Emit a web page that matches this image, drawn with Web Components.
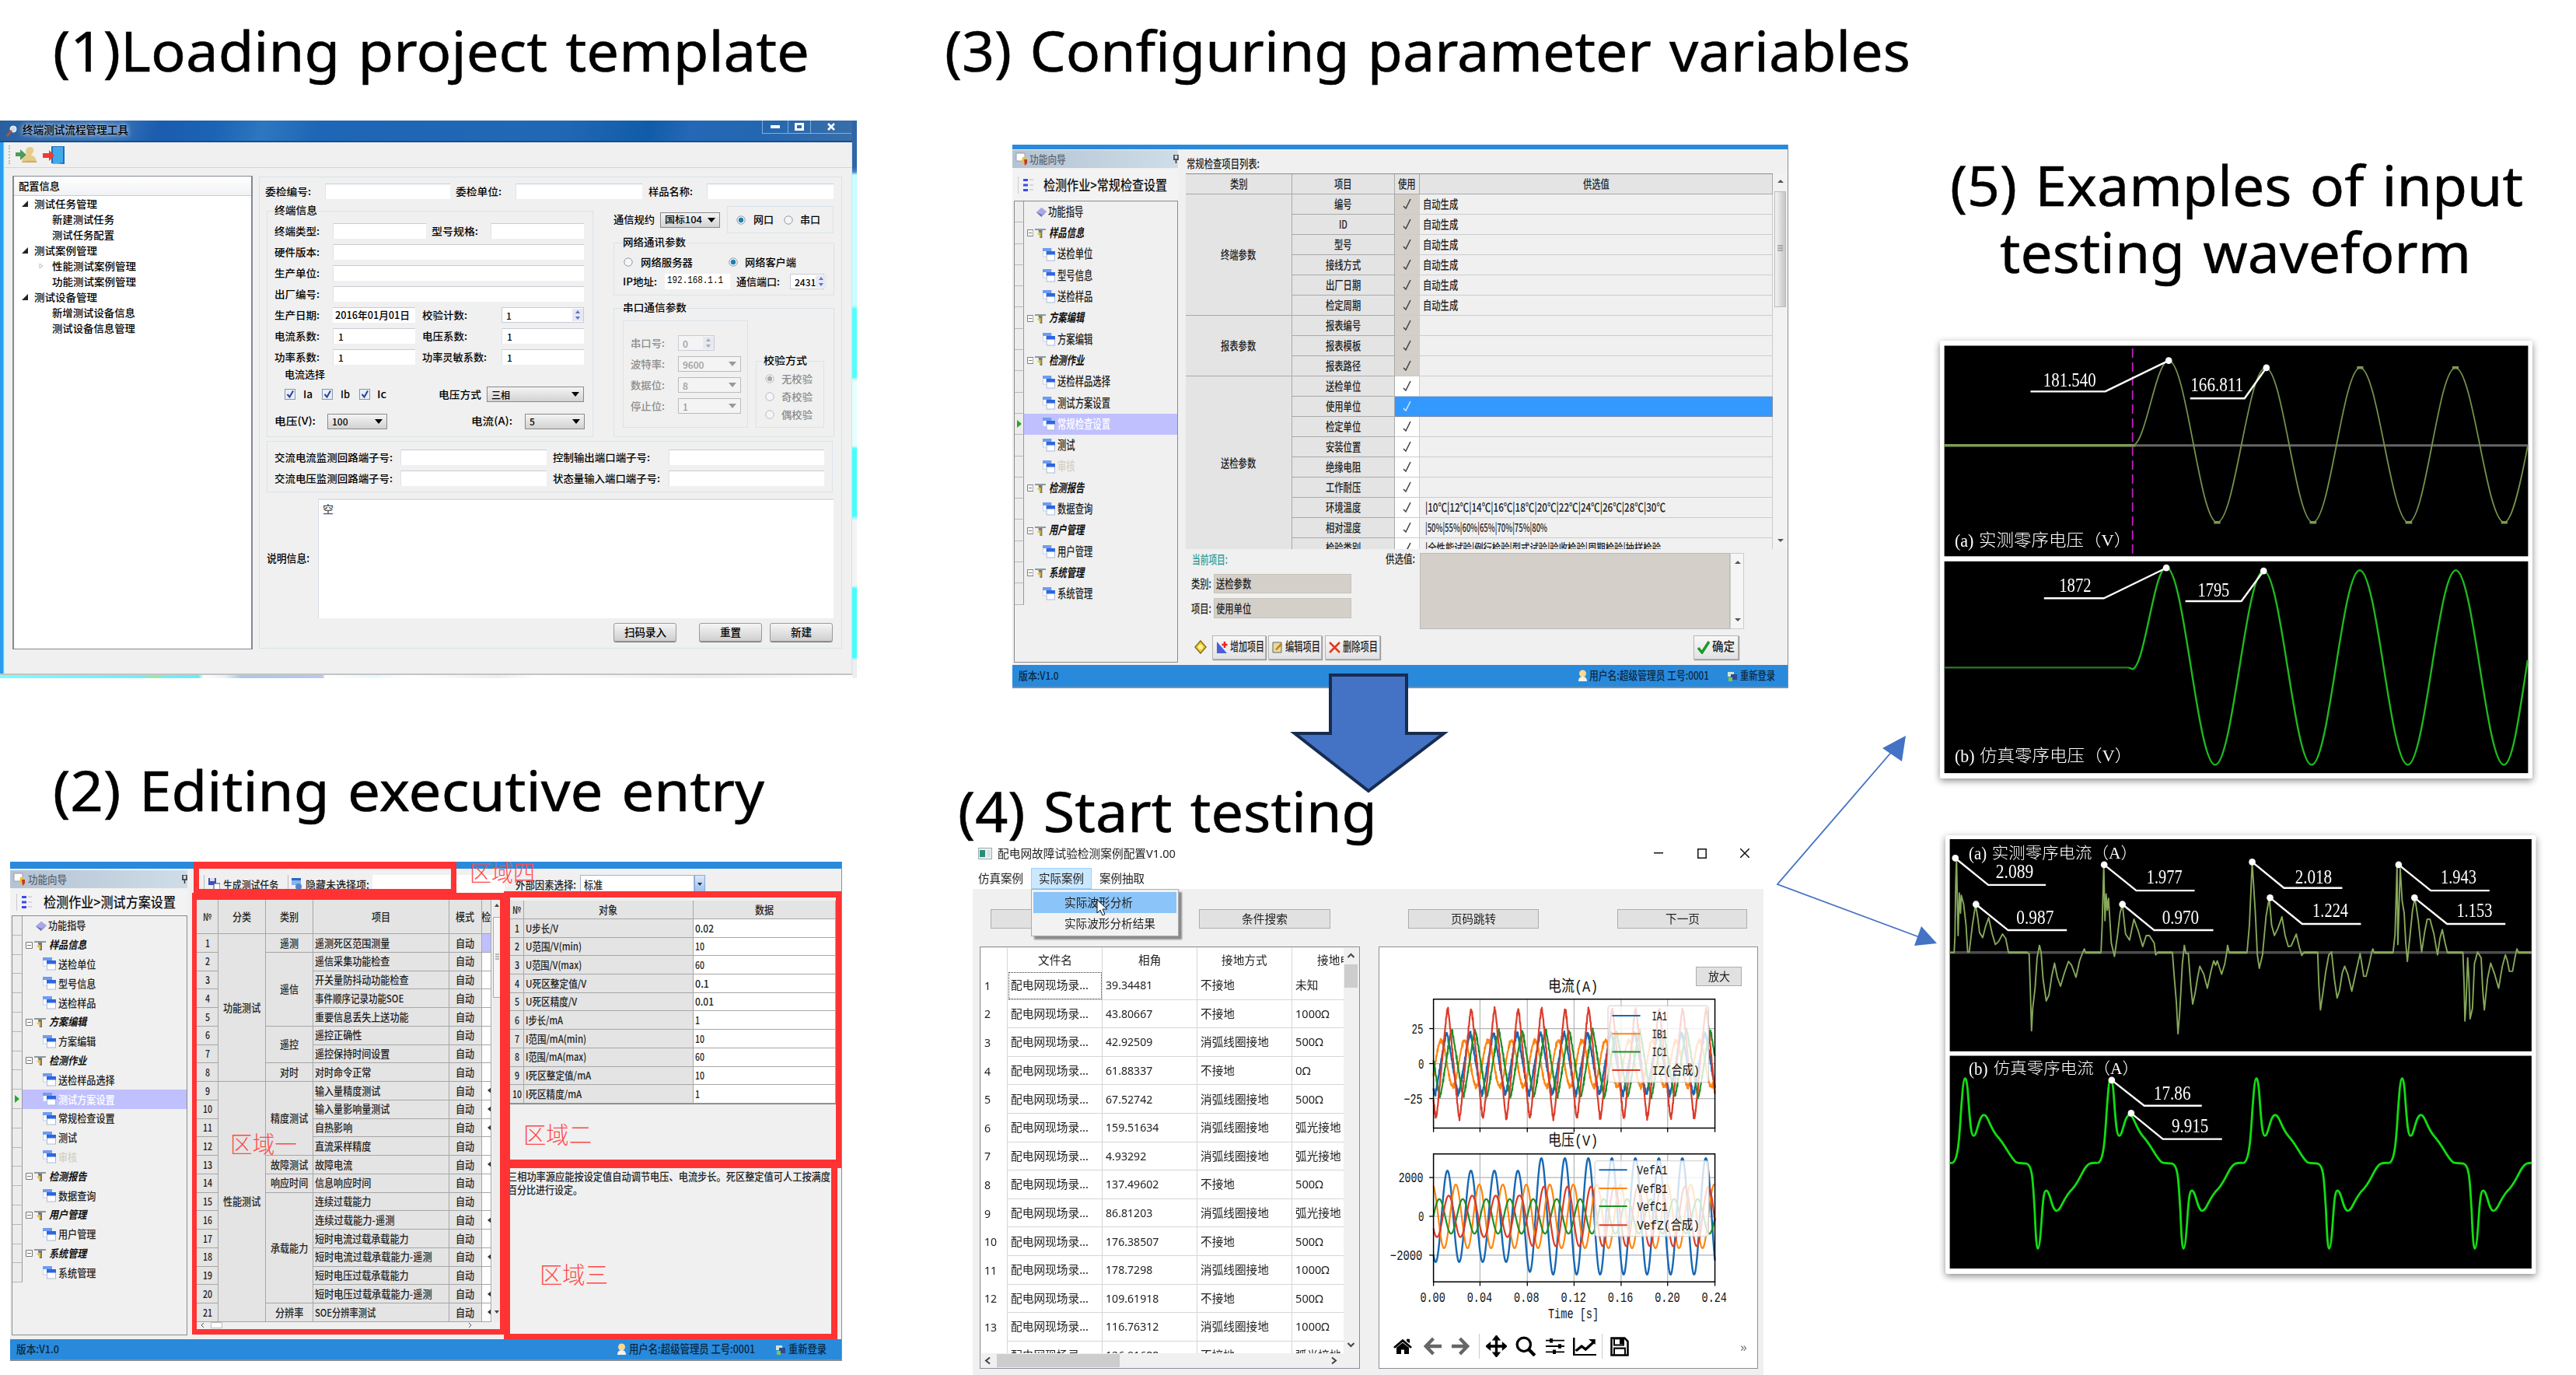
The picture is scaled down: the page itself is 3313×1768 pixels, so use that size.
<!DOCTYPE html>
<html lang="en">
<head>
<meta charset="utf-8">
<title>Testing workflow</title>
<style>
html,body{margin:0;padding:0;background:#fff}
body{width:3313px;height:1768px;overflow:hidden;position:relative;font-family:"Noto Sans","Noto Sans CJK SC",sans-serif}
.at{position:absolute}
</style>
</head>
<body>
<slide-title class="at" style="left:68px;top:24px" w="973">(1)Loading project template</slide-title>
<slide-title class="at" style="left:68px;top:975px" w="915">(2) Editing executive entry</slide-title>
<slide-title class="at" style="left:1215px;top:24px" w="1242">(3) Configuring parameter variables</slide-title>
<slide-title class="at" style="left:2508px;top:197px" w="737">(5) Examples of input</slide-title>
<slide-title class="at" style="left:2572px;top:283px" w="606">testing waveform</slide-title>
<form-window class="at" style="left:0;top:155px"></form-window>
<wizard-window class="at" style="left:13px;top:1108px" w="1070" h="642" strip="9" status="614" k="1" head="11" titlerow="34" title="检测作业&gt;测试方案设置" rh="24.8" fs="14" sel="9" navh="540"><plan-view></plan-view></wizard-window>
<wizard-window class="at" style="left:1302px;top:186px" w="998" h="699" strip="6" status="669" k="0.936" head="7" titlerow="41" title="检测作业&gt;常规检查设置" rh="27.3" fs="15.5" sel="10" navh="594"><check-view></check-view></wizard-window>
<fault-window class="at" style="left:1251px;top:1084px"></fault-window>
<slide-title class="at" style="left:1232px;top:1002px" w="539">(4) Start testing</slide-title>
<flow-arrows class="at" style="left:1655px;top:860px"></flow-arrows>
<wave-panel class="at" kind="voltage" style="left:2495px;top:438px"></wave-panel>
<wave-panel class="at" kind="current" style="left:2502px;top:1074px"></wave-panel>

<script>
const BASE=`:host{display:block}*{box-sizing:border-box}
.h{display:flex;flex:1;height:100%;align-items:center}.v{display:flex;flex-direction:column;flex:none;width:100%}
.v>div{flex:none;display:flex}.c{flex:none;display:flex;align-items:center;height:100%}
svg{display:block;flex:none}`;
const H=(x0,items,st='')=>{let p=x0;return `<div class="h" style="${st}">`+items.map(([x,w,c='',s=''])=>{const m=x-p;p=x+w;return `<div class="c" style="margin-left:${m.toFixed(2)}px;width:${w}px;${s}">${c}</div>`}).join('')+'</div>'};
const V=(y0,items,st='')=>{let p=y0;return `<div class="v" style="${st}">`+items.map(([y,h,c='',s=''])=>{const m=y-p;p=y+h;return `<div style="margin-top:${m.toFixed(2)}px;height:${h}px;${s}">${c}</div>`}).join('')+'</div>'};
const T=(w,t,fs=13,s='')=>`<fit-text w="${w}" style="font-size:${fs}px;${s}">${t}</fit-text>`;
const make=(name,css,html)=>customElements.define(name,class extends HTMLElement{
  connectedCallback(){ if(this.shadowRoot) return; const r=this.attachShadow({mode:'open'});
    r.innerHTML='<style>'+BASE+css+'</style>'+(typeof html==='function'?html(this):html); }
});
const svg=(w,h,vb,body,s='')=>`<svg width="${w}" height="${h}" viewBox="${vb}" preserveAspectRatio="none" style="${s}">${body}</svg>`;

/* ---------- headings ---------- */
make('slide-title',`:host{font-size:71px;line-height:82px;color:#000;font-family:"Noto Sans",sans-serif;word-spacing:4px;-webkit-text-stroke:.5px #000}`,
  el=>`<fit-text w="${el.getAttribute('w')}" style="line-height:82px"><slot></slot></fit-text>`);

/* ---------- window 1: terminal form ---------- */
const L=(x,w,t,s='')=>[x,w,T(w,t,13,s)];
const IN=(x,w,t='',s='')=>[x,w,t?`<span style="padding-left:6px;font-size:12px">${t}</span>`:'',`background:#fff;height:20px;border-top:1px solid #c9ccd2;border-left:1px solid #dde4ea;${s}`];
const CB=(x,w,t,dis,h=20)=>[x,w,`<span style="flex:1;padding-left:5px;font-size:12px;white-space:nowrap">${t}</span>${svg(10,6,'0 0 10 6',`<path d="M0 0h10L5 6z" fill="${dis?'#999':'#000'}"/>`,'margin-right:5px')}`,`height:${h}px;border:1px solid ${dis?'#bbb':'#8a8a8a'};background:${dis?'#f4f4f4':'linear-gradient(#f4f4f4,#d2d2d2)'};${dis?'color:#999':''}`];
const SP=(x,w,t,dis)=>[x,w,`<span style="flex:1;padding-left:5px;font-size:12px">${t}</span>${svg(14,16,'0 0 14 16',`<rect width="14" height="16" fill="#e6e9f2"/><path d="M4 6l3-4 3 4zM4 10l3 4 3-4z" fill="${dis?'#aaa':'#5b74c8'}"/>`)}`,`height:20px;background:${dis?'#f4f4f4':'#fff'};border:1px solid #c9ccd2;${dis?'color:#999':''}`];
const RD=(x,on,dis)=>[x-6,12,svg(12,12,'0 0 12 12',`<circle cx="6" cy="6" r="5.2" fill="#f6f6f6" stroke="${dis?'#bbb':'#8f9aa5'}"/>${on?`<circle cx="6" cy="6" r="3.2" fill="${dis?'#aaa':'#1c7fb5'}"/>`:''}`)];
const CK=x=>[x,14,svg(14,14,'0 0 14 14','<rect x=".5" y=".5" width="13" height="13" fill="#e9eef8" stroke="#8b95a5"/><path d="M3.5 7l3 3.500L11 2.500" fill="none" stroke="#26439a" stroke-width="2"/>')];
const BT=(x,w,t,tw)=>[x,w,T(tw,t,14),'justify-content:center;height:24px;border:1px solid #9a9a9a;border-radius:3px;background:linear-gradient(#f5f5f5,#cfcfcf);box-shadow:0 1px 0 #777'];
const BORD='box-shadow:inset 0 0 0 1px #d9e3ea;';
const treeRow=(x,w,t,lv)=>H(16,[[lv==0?26:48,10,lv==0?svg(8,8,'0 0 8 8','<path d="M8 0v8H0z" fill="#222"/>'):(lv==2?svg(6,8,'0 0 6 8','<path d="M1 1l4 3-4 3z" fill="none" stroke="#bbb"/>'):'')],[x,w,T(w,t,13)]]);
make('form-window',`:host{position:absolute;width:1102px;height:717px;overflow:hidden;color:#000;font-weight:500;--dy:-1.5px;font-family:"Noto Sans CJK SC",sans-serif;
 background:linear-gradient(90deg,#2c9cf0 0 4px,#8ff 5px,#f0f0f0 6px 1095px,#a8d8ee 1096px,#d8ffff 1102px)}
 .bar{background:linear-gradient(105deg,#2a5f9f 0,#3a75b8 140px,#1b5cae 200px,#1b64b4 270px,#2d77c0 330px,#1e66b6 400px,#2168b4 700px,#105ca8 810px,#2468b6 860px,#2467b0 950px,#3a6ea8);border-bottom:2px solid #174f8f}
 .edge{position:absolute;right:0;top:0;width:6px;height:717px;background:linear-gradient(#2f66a8 0 60px,#4a86c8 66px,#c8ffff 70px 238px,#5ff 242px 330px,#e8ffff 334px 418px,#4ff 422px 508px,#f4f4f4 514px 598px,#4ff 602px 690px,#eee 694px)}`,
()=>{
 const tree=V(226,[[226,25,H(16,[[22,53,T(53,'配置信息',13)]]),'border-bottom:1px solid #ccc;background:linear-gradient(#fff,#f1f2f4)'],
  ...[[42,81,'测试任务管理',0],[65,80,'新建测试任务',1],[65,80,'测试任务配置',1],[42,81,'测试案例管理',0],[65,108,'性能测试案例管理',2],[65,108,'功能测试案例管理',1],[42,81,'测试设备管理',0],[65,107,'新增测试设备信息',1],[65,107,'测试设备信息管理',1]].map((r,i)=>[251+i*20,20,treeRow(...r)])]);
 const leftG=V(270,[
  [262,14,H(343,[[353,55,T(55,'终端信息',13,'background:#f0f0f0')]])],
  [286,20,H(343,[L(353,58,'终端类型:'),IN(428,120),L(555,60,'型号规格:'),IN(631,120)])],
  [313,20,H(343,[L(353,58,'硬件版本:'),IN(428,323)])],
  [340,20,H(343,[L(353,58,'生产单位:'),IN(428,323)])],
  [367,20,H(343,[L(353,58,'出厂编号:'),IN(428,323)])],
  [394,20,H(343,[L(353,58,'生产日期:'),[428,106,'<span style="padding-left:3px">'+T(96,'2016年01月01日',13)+'</span>','background:#fff;height:20px;border-top:1px solid #c9ccd2'],L(543,58,'校验计数:'),SP(645,106,'1')])],
  [421,20,H(343,[L(353,58,'电流系数:'),IN(428,106,'1'),L(543,58,'电压系数:'),IN(645,106,'1')])],
  [448,20,H(343,[L(353,58,'功率系数:'),IN(428,106,'1'),L(543,83,'功率灵敏系数:'),IN(645,106,'1')])],
  [474,12,H(343,[[366,52,T(52,'电流选择',13)]])],
  [490,32,H(343,[CK(366),L(390,12,'Ia'),CK(414),L(438,12,'Ib'),CK(462),L(485,12,'Ic'),L(564,55,'电压方式'),CB(626,125,'三相')])],
  [530,21,H(343,[L(353,53,'电压(V):'),CB(421,77,'100'),L(606,53,'电流(A):'),CB(675,77,'5')])]
 ],BORD+'height:291px');
 const d='color:#8c8c8c';
 const rightG=V(263,[
  [265,35,H(789,[L(789,53,'通信规约'),CB(849,77,T(48,'国标104',12)),[935,137,H(935,[RD(953,1),L(969,26,'网口'),RD(1014,0),L(1029,26,'串口')]),BORD]])],
  [312,68,V(312,[[305,12,H(789,[[801,81,T(81,'网络通讯参数',13,'background:#f0f0f0')]])],[327,20,H(789,[RD(808,0),L(824,67,'网络服务器'),RD(943,1),L(958,66,'网络客户端')])],[352,20,H(789,[L(801,44,'IP地址:'),[855,84,'<span style="padding-left:3px">'+T(72,'192.168.1.1',12,'font-family:Liberation Mono')+'</span>','background:#fff'],L(947,56,'通信端口:'),SP(1016,44,'2431')])]]),BORD],
  [396,166,V(396,[[389,12,H(789,[[801,82,T(82,'串口通信参数',13,'background:#f0f0f0')]])],
    [412,138,H(789,[[801,161,V(412,[[431,20,H(801,[L(811,44,'串口号:',d),SP(872,47,'0',1)])],[458,20,H(801,[L(811,44,'波特率:',d),CB(872,81,'9600',1)])],[485,20,H(801,[L(811,44,'数据位:',d),CB(872,81,'8',1)])],[512,20,H(801,[L(811,44,'停止位:',d),CB(872,81,'1',1)])]]),'align-items:flex-start;'+BORD],
     [972,88,V(464,[[457,12,H(972,[[982,56,T(56,'校验方式',13,'background:#f0f0f0')]])],[477,20,H(972,[RD(990,1,1),L(1005,40,'无校验',d)])],[500,20,H(972,[RD(990,0,1),L(1005,40,'奇校验',d)])],[523,20,H(972,[RD(990,0,1),L(1005,40,'偶校验',d)])]]),'height:86px;margin-top:52px;align-items:flex-start;'+BORD]])]]),BORD]
 ]);
 const panel=V(227,[
  [236,20,H(333,[L(341,59,'委检编号:'),IN(418,161),L(586,59,'委检单位:'),IN(663,163),L(834,57,'样品名称:'),IN(909,163)])],
  [263,299,H(333,[[343,420,leftG,'height:291px'],[789,284,rightG,'height:299px;align-items:flex-start']],'align-items:flex-end')],
  [567,66,V(567,[[578,20,H(343,[L(353,152,'交流电流监测回路端子号:'),IN(515,188),L(711,125,'控制输出端口端子号:'),IN(860,200)])],[605,20,H(343,[L(353,152,'交流电压监测回路端子号:'),IN(515,188),L(711,138,'状态量输入端口端子号:'),IN(860,200)])]]),'margin-left:10px;width:728px;'+BORD],
  [641,154,H(333,[[343,55,T(55,'说明信息:',14)],[409,663,'<span style="padding:3px 5px;font-size:14px;line-height:16px;color:#555">空</span>','background:#fff;border-top:2px solid #dcdfe3;border-left:1px solid #d5dde3;align-items:flex-start']])],
  [801,24,H(333,[BT(789,81,'扫码录入',54),BT(899,81,'重置',27),BT(990,81,'新建',27)])]
 ]);
 const wb=';justify-content:center;align-self:flex-start;height:17px;border:solid #86abd6;border-width:0 0 1px 1px';
 return V(155,[
  [155,28,`<div class="bar" style="flex:1;display:flex">`+H(0,[[8,16,svg(14,15,'0 0 14 15','<circle cx="9" cy="5" r="4" fill="#cde" stroke="#fff"/><path d="M7 7l-6 7" stroke="#a85a3a" stroke-width="3"/>')],[29,136,T(136,'终端测试流程管理工具',13.5,'text-shadow:0 0 5px #cfe2ff,0 0 8px #bcd')],
    [980,33,svg(12,4,'0 0 12 4','<rect width="12" height="4" fill="#fff"/>'),wb],[1013,29,svg(12,10,'0 0 12 10','<path d="M1.500 1.500h9v7h-9z" fill="none" stroke="#fff" stroke-width="3"/>'),wb],[1042,53,svg(10,10,'0 0 10 10','<path d="M1 1l8 8M9 1l-8 8" stroke="#fff" stroke-width="2.500"/>'),wb]])+'</div>'],
  [183,33,H(6,[[11,2,'','border-left:2px dotted #bbb;height:24px'],[20,27,svg(27,22,'0 0 27 22','<path d="M8 21c0-8 5-8 7-10-4-4-1-11 4-10 6 1 5 7 1 10 4 2 7 4 7 10z" fill="#e6cc8a"/><path d="M8 21c2-3 12-2 19-2v2z" fill="#cfae62"/><path d="M0 8h6V4l8 7-8 7v-5H0z" fill="#4d9a5a"/>')],[55,28,svg(28,25,'0 0 28 25','<path d="M11 1h17v23l-17-1z" fill="#1c6fb8"/><path d="M13 2h13v20l-13 2z" fill="#43aaea"/><path d="M0 10h8V6l7 7-7 7v-4H0z" fill="#ee3a32"/>')]]),'margin-left:6px;width:1089px;background:#f0f0f0;border-bottom:1px solid #d4d4d4'],
  [216,650,H(0,[[16,309,tree,'background:#fff;border:solid #848891;border-width:1px 2px;height:609px;margin-top:10px;align-items:flex-start'],[333,750,panel,'height:607px;margin-top:11px;align-items:flex-start;'+BORD]],'align-items:flex-start')],
  [866,6,'','background:linear-gradient(90deg,#7ff 0,#6ef0f8 180px,#9fe8a0 200px,#6cf0ff 215px,#5eeeff 255px,#fff 262px,#e8f0f8 290px,#a9c8e8 310px,#b8c8f0 415px,#fff 418px,#e8f8ff 480px,#fff 530px,#eee 640px,#fff 690px,#eee 900px,#fff);border-top:2px solid #c4c4c4']
 ])+`<div class="edge"></div>`;
});

/* ---------- wizard windows (2 and 3) ---------- */
const NAV=[['功能指导',0],['样品信息',1],['送检单位',2],['型号信息',2],['送检样品',2],['方案编辑',1],['方案编辑',2],['检测作业',1],['送检样品选择',2],['测试方案设置',2],['常规检查设置',2],['测试',2],['审核',2],['检测报告',1],['数据查询',2],['用户管理',1],['用户管理',2],['系统管理',1],['系统管理',2]];
const NI=[
 svg('100%',15,'0 0 15 15','<path d="M1 8l7-6 7 5-7 7z" fill="#8f8fd6"/><path d="M1 8l7 3 7-4-7-5z" fill="#a9a9e4"/><path d="M1 8l7 3v3z" fill="#6a6ab0"/>'),
 svg('100%',15,'0 0 15 15','<path d="M0 2h15v2H10v2H5V4H0z" fill="#8d9a9a"/><path d="M5 4h5v10H7z" fill="#777"/><path d="M3 8l5-1v6z" fill="#f0c020"/>'),
 svg('100%',17,'0 0 17 17','<rect x=".5" y="1" width="11" height="10" fill="#fff" stroke="#c3d0ea"/><rect x="0" y="0" width="12" height="4" fill="#6f9cf0"/><rect x="5.500" y="6" width="11" height="10" fill="#fff" stroke="#a9b8dc"/><rect x="5" y="4" width="12" height="4.500" fill="#2c66e0"/>')];
make('nav-tree',`:host{background:#f0f0f0;border:1px solid #8b8b8b;overflow:hidden;color:#222}
 .r{display:flex;align-items:center;flex:none}.g{flex:none;height:100%;background:#ececec;border-right:1px solid #999;border-bottom:1px solid #b8b8b8;display:flex;align-items:center;justify-content:center}
 .on{background:#c0c0ff}.b{flex:1;display:flex;align-items:center;height:100%}`,
el=>{const k=+el.getAttribute('k'),rh=+el.getAttribute('rh'),fs=el.getAttribute('fs'),sel=+el.getAttribute('sel');
 return NAV.map(([t,lv],i)=>{const tw=(t.length*12.1*k).toFixed(1);
  const txt=T(tw,t,fs,(lv==1?'font-weight:700;font-style:italic;color:#111;':'')+(i==sel?'color:#fff;':'')+(i==12?'color:#d4d0c4;':''));
  const items=lv==0?[[29,15,NI[0]],[46,50,txt]]:lv==1?[[17,9,svg('100%',9,'0 0 9 9','<path d="M.5.5h8v8h-8zM2 4.500h5" fill="#fff" stroke="#777"/>')],[28,15,NI[1]],[47,50,txt]]:[[39,17,NI[2]],[59,80,txt]];
  return `<div class="r" style="height:${rh}px"><div class="g" style="width:${13*k}px">${i==sel?svg(6,10,'0 0 6 10','<path d="M0 0l6 5-6 5z" fill="#2aa52a"/>'):''}</div><div class="b ${i==sel?'on':''}">`+H(13*k,items.map(([x,w,c])=>[x*k,+(w*k).toFixed(2),c]))+`</div></div>`}).join('')});
make('wizard-window',`:host{position:absolute;background:#f0f0f0;font-family:"Noto Sans CJK SC",sans-serif;font-weight:500;color:#222;border-right:1.5px solid #8a8f96;border-bottom:2px solid #8a8f96;box-sizing:border-box;overflow:hidden;--dy:-1.5px}
 .nav{flex:none;display:flex;flex-direction:column}`,
el=>{const g=n=>+el.getAttribute(n),k=g('k'),w=g('w'),h=g('h');el.style.width=w+'px';el.style.height=h+'px';
 const q=a=>a.map(([x,w,c,s])=>[x*k,+(w*k).toFixed(2),c,s]);
 const head=H(0,q([[4,17,svg(16,17,'0 0 16 17','<path d="M1 1h11v10H1z" fill="#fff" stroke="#99a"/><path d="M9 6h5v6l-2 4-4-4z" fill="#f0c030"/><path d="M11 9h4v5l-3 3z" fill="#c0392b"/>')],[23,50,T(50*k,'功能向导',14,'color:#5b6672')],[221,7,svg(7,11,'0 0 7 11','<path d="M1 0h5v6h1H0h1zM3.500 6v5" fill="none" stroke="#333" stroke-width="1.500"/>')]]));
 const title=H(0,q([[3,6,'','border-right:1px solid #ccc;height:22px'],[15,14,svg(14,18,'0 0 14 18','<path d="M0 1h6v3H0zM0 7.500h6v3H0zM0 14h6v3H0z" fill="#3b4bf0"/><path d="M8 2h5M8 9h5M8 15h5" stroke="#bbb"/>')],[43,170,T(170*k,el.getAttribute('title').replace('>','&gt;'),18,'color:#111')]]),'background:#f3f3f3');
 const st=H(0,[[8,55*k,T(55*k,'版本:V1.0',14)],[(k==1?781:728),11,svg(11,16,'0 0 11 16','<circle cx="5.500" cy="5" r="4.500" fill="#ffd98a"/><path d="M0 15q0-6 5.500-6t5.500 6z" fill="#f6f2e6"/>')],[k==1?796:742,k==1?162:154,T(k==1?162:154,'用户名:超级管理员 工号:0001',14.5)],[k==1?985:920,13,svg(13,14,'0 0 13 14','<path d="M0 2h8v6H0z" fill="#cfe6cf"/><path d="M4 5h8v7H4z" fill="#304a90"/><path d="M1 9h5v5H1z" fill="#7ec850"/>')],[k==1?1001:936,k==1?49:45,T(k==1?49:45,'重新登录',14.5)]]);
 const hh=23,top=g('head');
 return V(0,[[0,g('strip'),'','background:#298adc'],
  [g('strip'),g('status')-g('strip'),`<div class="nav" style="width:${(228*k).toFixed(1)}px">`+V(g('strip'),[[top,hh,head,'background:linear-gradient(90deg,#b4c3d3,#cfdde9)'],[top+hh+1,g('titlerow'),title],[top+hh+1+g('titlerow'),g('navh'),`<nav-tree k="${k}" rh="${g('rh')}" fs="${g('fs')}" sel="${g('sel')}" style="flex:1;margin-left:2px"></nav-tree>`]])+`</div><slot></slot>`],
  [g('status'),h-g('status')-2,st,'background:#298adc;color:#0b2740']])});

make('plan-view',`:host{position:relative;width:840px;height:605px;flex:none;font-size:14px;color:#222;--dy:-.5px}
 .g{display:grid;background:#e4e4e4}.g>div{border:solid #a6a6a6;border-width:0 1px 1px 0;display:flex;align-items:center;justify-content:center;overflow:hidden}
 .g>.l{justify-content:flex-start;padding-left:2px}.w{background:#fff!important}.sel{background:#c0c0ff}
 .fr{position:absolute;border:7px solid #f33}.tag{position:absolute;color:#ff4a4a;font-weight:300}`,
()=>{ /* origin of this view is x=241, y=1117 on the page */
 const items='遥测死区范围测量,遥信采集功能检查,开关量防抖动功能检查,事件顺序记录功能SOE,重要信息丢失上送功能,遥控正确性,遥控保持时间设置,对时命令正常,输入量精度测试,输入量影响量测试,自热影响,直流采样精度,故障电流,信息响应时间,连续过载能力,连续过载能力-遥测,短时电流过载承载能力,短时电流过载承载能力-遥测,短时电压过载承载能力,短时电压过载承载能力-遥测,SOE分辨率测试'.split(',');
 const wid=t=>{let n=0;for(const c of t)n+=c.charCodeAt(0)>255?12.05:6;return n.toFixed(1)};
 const F=(t,s)=>T(wid(t),t,13.5,s);
 const cell=(c,r,rs,t,cl='')=>`<div class="${cl}" style="grid-column:${c};grid-row:${r}/span ${rs}">${t}</div>`;
 let a='';['№','分类','类别','项目','模式','检'].forEach((t,i)=>a+=cell(i+1,1,1,i==0?T(11,t,13):F(t)));
 items.forEach((t,i)=>{a+=cell(1,i+2,1,F(''+(i+1)))+cell(4,i+2,1,F(t),'l')+cell(5,i+2,1,F('自动'))+cell(6,i+2,1,[9,10,11,13,16,18,20,21].includes(i+1)?svg(5,8,'0 0 5 8','<path d="M5 0v8L0 4z" fill="#333"/>','margin-left:7px'):'',i?'w':'sel')});
 a+=cell(2,2,8,F('功能测试'))+cell(2,10,13,F('性能测试'));
 let r=2;[['遥测',1],['遥信',4],['遥控',2],['对时',1],['精度测试',4],['故障测试',1],['响应时间',1],['承载能力',6],['分辨率',1]].forEach(([t,n])=>{a+=cell(3,r,n,F(t));r+=n});
 const g1=`<div class="g" style="grid-template-columns:28px 61px 61px 175px 42px 12px;grid-template-rows:44px repeat(21,23.75px);height:543px">${a}</div>`;
 let b='';['№','对象','数据'].forEach((t,i)=>b+=cell(i+1,1,1,i==0?T(11,t,13):F(t)));
 ['U步长/V,0.02','U范围/V(min),10','U范围/V(max),60','U死区整定值/V,0.1','U死区精度/V,0.01','I步长/mA,1','I范围/mA(min),10','I范围/mA(max),60','I死区整定值/mA,10','I死区精度/mA,1'].forEach((s,i)=>{const [x,y]=s.split(',');b+=cell(1,i+2,1,F(''+(i+1)))+cell(2,i+2,1,F(x),'l')+cell(3,i+2,1,F(y),'l w')});
 const g2=`<div class="g" style="grid-template-columns:18px 218px 183px;grid-template-rows:24px repeat(10,23.7px);border-bottom:1px solid #777">${b}</div>`;
 const ico=svg(15,16,'0 0 15 16','<path d="M0 0h10v9H0z" fill="#3f4fc0"/><path d="M2 0h6v4H2z" fill="#dde"/><path d="M7 7h8v9H7z" fill="#fff" stroke="#446"/>');
 const ico2=svg(14,16,'0 0 14 16','<path d="M0 0h12v9H0z" fill="#8ab4ee"/><path d="M0 0h12v3H0z" fill="#2c66c0"/><circle cx="9" cy="11" r="4" fill="#4d88c8"/>');
 return V(1117,[
  [1125,23,H(241,[[262,2,'','border-left:1px solid #bbb'],[268,15,ico],[287,71,T(71,'生成测试任务',14)],[370,2,'','border-left:1px solid #bbb'],[375,14,ico2],[393,82,T(82,'隐藏未选择项:',14)],[479,100,'','background:#fff'],[587,62,'','background:#fff'],[663,78,T(78,'外部因素选择:',14)],[746,147,'<span style="padding-left:4px">'+T(24,'标准',14)+'</span>','background:#fff;border:1px solid #9fb6d6'],[893,14,svg(6,4,'0 0 6 4','<path d="M0 0h6L3 4z" fill="#234"/>'),'justify-content:center;background:linear-gradient(#dbe8fb,#9dbdeb);border:1px solid #8aa8d8']])],
  [1157,560,H(241,[[253,379,V(1157,[[1157,543,g1],[1700,9,svg(360,8,'0 0 360 8','<path d="M9 1L6 4l3 3M350 1l3 3-3 3" fill="none" stroke="#555"/><path d="M18.500 .5h14v7h-14z" fill="#fff" stroke="#bbb"/>')]]),'align-items:flex-start'],
   [634,9,svg(9,543,'0 0 9 543','<rect width="9" height="543" fill="#ececec"/><path d="M2 9l3-4 3 4zM2 528l3 4 3-4z" fill="#444"/><rect x=".5" y="22.500" width="9" height="103" fill="#f5f5f5" stroke="#aaa"/><path d="M3 70h5M3 73h5M3 76h5" stroke="#777"/>'),'align-items:flex-start'],
   [653,424,V(1157,[[1158,262,g2,'width:419px;margin-left:3px'],[1504,36,`<div style="line-height:17px">${T(415,'三相功率源应能按设定值自动调节电压、电流步长。死区整定值可人工按满度',14,'line-height:17px')}${T(96,'百分比进行设定。',14,'line-height:17px')}</div>`]]),'align-items:flex-start']])]
 ])+`
 <div class="fr" style="left:8px;top:-9px;width:338px;height:42px;border-top-width:9px"></div>
 <div class="fr" style="left:6px;top:31px;width:409px;height:568px;border-width:9px 13px 7px 6px"></div>
 <div class="fr" style="left:407px;top:29px;width:434px;height:356px;border-width:8px 7px 11px 7px"></div>
 <div class="fr" style="left:407px;top:376px;width:429px;height:229px;border-width:9px 8px 7px 6px"></div>
 <div class="tag" style="left:363px;top:-12px">${T(84,'区域四',30)}</div>
 <div class="tag" style="left:55px;top:337px">${T(86,'区域一',30)}</div>
 <div class="tag" style="left:432px;top:325px">${T(88,'区域二',30)}</div>
 <div class="tag" style="left:453px;top:505px">${T(88,'区域三',30)}</div>`});

make('check-view',`:host{width:784px;height:663px;flex:none;color:#222}
 .g{display:grid;background:#e4e4e4;height:483px;overflow:hidden;border-top:1.5px solid #8c8c8c}.g>div{border:solid #a9a9a9;border-width:0 1px 1.500px 0;display:flex;align-items:center;justify-content:center;overflow:hidden}
 .g>.l{justify-content:flex-start;padding-left:4px;background:#f0f0f0;border-color:#ccc}.tan{background:#d4cfc8;border-color:#ccc!important}.w{background:#fff;border-color:#ccc!important}.g>.s{background:#39f;border-color:#78a!important}`,
()=>{ /* origin of this view is x=1515.4, y=192 on the page */
 const X0=1515.4,F=(t,s)=>T((t.length*11.3).toFixed(1),t,15,s);
 const items='编号,ID,型号,接线方式,出厂日期,检定周期,报表编号,报表模板,报表路径,送检单位,使用单位,检定单位,安装位置,绝缘电阻,工作耐压,环境温度,相对湿度,检验类别'.split(',');
 const cell=(c,r,rs,t,cl='')=>`<div class="${cl}" style="grid-column:${c};grid-row:${r}/span ${rs}">${t}</div>`;
 let a='';['类别','项目','使用','供选值'].forEach((t,i)=>a+=cell(i+1,1,1,F(t)));
 items.forEach((t,i)=>{const v=i<6?F('自动生成'):i==15?T(309,'|10℃|12℃|14℃|16℃|18℃|20℃|22℃|24℃|26℃|28℃|30℃',15,'margin-left:3px'):i==16?T(157,'|50%|55%|60%|65%|70%|75%|80%',15,'margin-left:3px'):i==17?T(303,'|全性能试验|例行检验|型式试验|验收检验|周期检验|抽样检验',15,'margin-left:3px'):'';
  a+=cell(2,i+2,1,t=='ID'?T(11,t,14):F(t))+cell(3,i+2,1,svg(11,15,'0 0 11 15',`<path d="M1 10l3 3L10 1" fill="none" stroke="${i==10?'#cfe6ff':'#444'}" stroke-width="1.600"/>`),i==10?'s':i<9?'tan':'w')+cell(4,i+2,1,v,i==10?'l s':'l')});
 a+=cell(1,2,6,F('终端参数'))+cell(1,8,3,F('报表参数'))+`<div style="grid-column:1;grid-row:11/span 9;padding-bottom:11px">${F('送检参数')}</div>`;
 const g=`<div class="g" style="width:755px;grid-template-columns:137px 132px 32px 454px;grid-template-rows:26px repeat(18,26px)">${a}</div>`;
 const sb=svg(17,483,'0 0 17 483','<defs><linearGradient id="s"><stop offset="0" stop-color="#f6f6f6"/><stop offset="1" stop-color="#c4c4c4"/></linearGradient></defs><rect width="17" height="483" fill="#f2f2f2"/><path d="M5 12l4-4 4 4zM5 470l4 4 4-4z" fill="#555"/><rect x="1.500" y="23.500" width="14" height="148" fill="url(#s)" stroke="#bbb"/><path d="M5 93h7M5 96h7M5 99h7" stroke="#777"/>');
 const B=(x,w,ic,t,tw)=>[x,w,ic+T(tw,t,15.5,'margin-left:3px'),'height:31px;padding-left:4px;border:1px solid #b5b5b5;background:linear-gradient(#f8f8f8,#e2e2e2);box-shadow:1px 1px 1px #999'];
 return V(192,[
  [201,18,H(X0,[[1526,94,T(94,'常规检查项目列表:',15)]])],
  [223,483,H(X0,[[1525,755,g],[2281,17,sb]]),''],
  [706,104,H(X0,[[1526,212,V(706,[[709,20,H(1526,[[1533,46,T(46,'当前项目:',15,'color:#2a9d94')]])],[738,25,H(1526,[[1532,27,T(26,'类别:',15)],[1561,177,F('送检参数','margin-left:2px'),'background:#d4cfc8;border:1px solid #c6c2bb']])],[769,26,H(1526,[[1532,27,T(26,'项目:',15)],[1561,177,F('使用单位','margin-left:2px'),'background:#d4cfc8;border:1px solid #c6c2bb']])]]),'align-items:flex-start'],
    [1782,40,T(38,'供选值:',15),'height:24px;align-self:flex-start'],[1826,399,'','background:#d4cfc8;height:98px;border:1px solid #bbb;margin-top:5px'],[2225,18,svg(17,98,'0 0 17 98','<path d="M5 14l4-4 4 4zM5 84l4 4 4-4z" fill="#555"/>'),'height:98px;background:#f5f5f5;border:1px solid #ccc;margin-top:5px']],'align-items:flex-start')],
  [816,32,H(X0,[[1536,16,svg(16,18,'0 0 16 18','<path d="M8 1l7 8-7 8-7-8z" fill="#f3cf2e" stroke="#86701a" stroke-width="1.500"/><circle cx="8" cy="9" r="3" fill="#fff3a0"/>')],
   B(1559,69,svg(15,17,'0 0 15 17','<path d="M1 1v15h13z" fill="#4a5fd8"/><path d="M11 1v8M7.500 5h7" stroke="#e22" stroke-width="2.500"/>'),'增加项目',44),
   B(1631,69,svg(14,16,'0 0 14 16','<path d="M1 2h11v13H1z" fill="#e9d9a0" stroke="#666"/><path d="M4 11l7-8 2 2-7 7z" fill="#b8860b"/>'),'编辑项目',45),
   B(1704,71,svg(15,15,'0 0 15 15','<path d="M1 1l13 13M14 1L1 14" stroke="#e03a1e" stroke-width="2.500"/>'),'删除项目',45),
   B(2178,58,svg(16,18,'0 0 16 18','<path d="M1 10l5 6L15 2" fill="none" stroke="#1b9a2a" stroke-width="3.500"/>'),'确定',29)])]
 ])});

/* ---------- window 4 ---------- */
const X=(x1,x2,yc,fs,t,o='')=>`<text x="${x1}" y="${yc+fs*.35}" font-size="${fs}" textLength="${x2-x1}" lengthAdjust="spacingAndGlyphs" ${o}>${t}</text>`;
make('signal-plot',`:host{flex:none;width:488px;height:543px}text{font-family:"Liberation Mono","Noto Sans CJK SC",monospace;fill:#111}`,()=>{
 const NS='vector-effect="non-scaling-stroke" fill="none"';
 const curve=(fn,c,w)=>{let d='';for(let x=273;x<=1344;x+=1.5)d+=(d?'L':'M')+x.toFixed(1)+' '+fn(x).toFixed(1);return `<path d="${d}" stroke="${c}" stroke-width="${w}" ${NS} stroke-linejoin="round"/>`};
 const P=89.4,cs=(x,p)=>Math.cos((x-p)/P*2*Math.PI);
 const tri=v=>Math.asin(v*.97)/1.33;
 const n=(x,a)=>a*Math.sin(x*1.9)*Math.cos(x*.37);
 const frame=(y1,y2,ys)=>[450,630,808,987,1164].map(x=>`<path d="M${x} ${y1}V${y2}" stroke="#b4b4b4" stroke-width="1.200" ${NS}/>`).join('')+ys.map(y=>`<path d="M273 ${y}H1344" stroke="#b4b4b4" stroke-width="1.200" ${NS}/><path d="M257 ${y}h16" stroke="#000" stroke-width="1.300" ${NS}/>`).join('');
 const edge=(y1,y2)=>`<path d="M273 ${y1}H1344V${y2}H273Z" stroke="#000" stroke-width="1.500" ${NS}/>`+[273,450,630,808,987,1164,1344].map(x=>`<path d="M${x} ${y2}v12" stroke="#000" stroke-width="1.300" ${NS}/>`).join('');
 const C=['#1668b4','#ff850f','#1c8f26','#dc3a28'];
 const amp=(x,a,b)=>{const t=Math.min(1,Math.max(0,(x-600)/50));return a+(b-a)*t};
 const leg=(x,y,w,h,lx,tx,ys,ts,ends)=>`<rect x="${x}" y="${y}" width="${w}" height="${h}" rx="9" fill="#fff" fill-opacity=".8" stroke="#ccc" vector-effect="non-scaling-stroke"/>`+ys.map((q,i)=>`<path d="M${lx} ${q}h107" stroke="${C[i]}" stroke-width="2" ${NS}/>`+X(tx,ends[i],q,38,ts[i])).join('');
 return svg(488,543,'67 331 1444 1219',
  frame(483,855,[568,669,770])+
  curve(x=>669-88*tri(cs(x,323))+n(x,9),C[0],2.4)+curve(x=>669-66*cs(x,302)+n(x+7,8),C[1],2.2)+curve(x=>669-94*tri(cs(x,342))+n(x+3,9),C[2],2.2)+curve(x=>669-157*tri(cs(x,327))+n(x+11,9),C[3],2.2)+
  edge(483,855)+X(709,900,445,46,'电流(A)')+X(190,234,568,40,'25')+X(215,237,669,40,'0')+X(160,231,770,40,'−25')+
  leg(937,502,383,221,953,1104,[531,583,635,688],['IA1','IB1','IC1','IZ(合成)'],[1162,1162,1162,1286])+
  frame(930,1299,[998,1110,1222])+
  curve(x=>1110-amp(x,132,168)*cs(x,326),C[0],2.4)+curve(x=>1110-92*cs(x,358),C[1],2.2)+curve(x=>1110-50*cs(x,295),C[2],2.2)+curve(x=>1110-amp(x,60,86)*cs(x,331+Math.min(1,Math.max(0,(x-600)/50))*5),C[3],2.2)+
  edge(930,1299)+X(709,900,890,46,'电压(V)')+X(140,234,998,40,'2000')+X(215,237,1110,40,'0')+X(108,231,1222,40,'−2000')+
  leg(887,950,433,218,903,1047,[976,1029,1081,1135],['VefA1','VefB1','VefC1','VefZ(合成)'],[1164,1164,1164,1286])+
  ['0.00','0.04','0.08','0.12','0.16','0.20','0.24'].map((t,i)=>X(222+i*178.6,318+i*178.6,1342,40,t)).join('')+X(709,902,1390,40,'Time [s]'))});
make('fault-window',`:host{width:1017px;height:684px;background:#f0f0f0;color:#222;font-family:"Noto Sans","Noto Sans CJK SC",sans-serif;overflow:hidden}
 .row{display:grid;grid-template-columns:34px 122px 122px 122px 66px;flex:none;height:100%}.row>div{border:solid #d6d6d6;border-width:0 1px 1.500px 0;padding-left:4px;display:flex;align-items:center;overflow:hidden}
 .row>div:first-child{border-bottom:0}.hd>div{border-bottom:0;padding:0;justify-content:center}
 .menu{position:absolute;left:75px;top:59px;width:190px;height:61px;background:#f2f2f2;border:1px solid #ababab;box-shadow:4px 4px 2px #8a8a8a;padding:3px 2px;z-index:2}
 .menu>div{height:27px;display:flex;align-items:center;padding-left:40px}.menu>div:first-child{background:#8bc4f8}
 .cur,.zoomb,.tb{position:absolute;z-index:3}`,()=>{
 const W=t=>{let n=0;for(const c of t)n+=c.charCodeAt(0)>0x2e80?14.65:c=='Ω'?11.5:c=='.'?4:8.05;return n.toFixed(1)};
 const F=(t,s='')=>T(W(t),t,15,s);
 const B=(x,w,t,tw)=>[x,w,t?T(tw,t,15):'','justify-content:center;height:25px;background:#e1e1e1;border:1.500px solid #adadad'];
 const data=[['39.34481','不接地','未知'],['43.80667','不接地','1000Ω'],['42.92509','消弧线圈接地','500Ω'],['61.88337','不接地','0Ω'],['67.52742','消弧线圈接地','500Ω'],['159.51634','消弧线圈接地','弧光接地'],['4.93292','消弧线圈接地','弧光接地'],['137.49602','不接地','500Ω'],['86.81203','消弧线圈接地','弧光接地'],['176.38507','不接地','500Ω'],['178.7298','消弧线圈接地','1000Ω'],['109.61918','不接地','500Ω'],['116.76312','消弧线圈接地','1000Ω'],['126.91688','不接地','弧光接地']];
 const row=(d,i)=>`<div class="row" style="height:36.6px"><div>${F(i<13?''+(i+1):'')}</div><div ${i==0?'style="outline:1.500px dotted #333;outline-offset:-2px"':''}>${T(100,'配电网现场录...',15)}</div>${d.map((t,j)=>`<div ${j==2?'style="border-right:0"':''}>${F(t)}</div>`).join('')}</div>`;
 const table=`<div style="width:466px;height:521px;overflow:hidden;background:#fff"><div class="row hd" style="height:30px"><div></div><div>${F('文件名')}</div><div>${F('相角')}</div><div>${F('接地方式')}</div><div style="justify-content:flex-start;padding-left:32px;border-right:0">${F('接地电阻')}</div></div>${data.map(row).join('')}</div>`;
 const vsb=svg(19,521,'0 0 19 521','<rect width="19" height="521" fill="#f0f0f0"/><path d="M5.500 12l4-4 4 4M5.500 508l4 4 4-4" fill="none" stroke="#444" stroke-width="2"/><rect x="1" y="21" width="17" height="30" fill="#cdcdcd"/>');
 const hsb=svg(485,19,'0 0 485 19','<rect width="485" height="19" fill="#f0f0f0"/><path d="M12 5.500l-5 4 5 4M452 5.500l5 4-5 4" fill="none" stroke="#444" stroke-width="2"/><rect x="21" y="1" width="158" height="17" fill="#cdcdcd"/>');
 const I=(w,h,b)=>svg(w,h,'0 0 24 24',b);
 const tools=[[1792,24,I(24,22,'<path d="M0 13L12 2l12 11-2 2L12 6 2 15zM4 14l8-7 8 7v9h-6v-6h-4v6H4zM17 2h4v6l-4-3z" fill="#000"/>')],
  [1831,24,I(23,24,'<path d="M13 2L3 12l10 10M4 12h20" fill="none" stroke="#666" stroke-width="4.500"/>')],[1867,24,I(23,24,'<path d="M11 2l10 10-10 10M20 12H0" fill="none" stroke="#666" stroke-width="4.500"/>')],
  [1902,1,'','background:#ccc;height:32px'],
  [1911,27,I(27,28,'<path d="M12 0l4 5h-3v6h6V8l5 4-5 4v-3h-6v6h3l-4 5-4-5h3v-6H5v3L0 12l5-4v3h6V5H8z" fill="#000" stroke="#000"/>')],
  [1949,26,I(26,26,'<circle cx="10" cy="10" r="8" fill="none" stroke="#000" stroke-width="3"/><path d="M15.500 15.500L23 23" stroke="#000" stroke-width="4"/>')],
  [1988,24,I(24,22,'<path d="M0 4h24M0 12h24M0 20h24" stroke="#000" stroke-width="2"/><path d="M5 1h4v6H5zM16 9h4v6h-4zM9 17h4v6H9z" fill="#000"/>')],
  [2023,30,I(30,24,'<path d="M1 1v22h23" fill="none" stroke="#000" stroke-width="2"/><path d="M3 18l6-6 4 4 8-9" fill="none" stroke="#000" stroke-width="3"/><path d="M16 3h7v7z" fill="#000"/>')],
  [2060,1,'','background:#ccc;height:32px'],
  [2071,24,I(24,25,'<path d="M1.500 1.500h17l4 4v17h-21z" fill="none" stroke="#000" stroke-width="2.500"/><path d="M5 2h12v8H5zM5 22v-8h14v8" fill="none" stroke="#000" stroke-width="2"/><path d="M12 2h4v7h-4z" fill="#000"/>')],
  [2238,12,T(9,'»',17,'color:#777')]];
 return V(1084,[
  [1084,26,H(1251,[[1258,18,svg(18,15,'0 0 18 15','<rect x=".5" y=".5" width="17" height="14" fill="#eef2f2" stroke="#9aa"/><rect x="2" y="3" width="7" height="9" fill="#2e8b7a"/><rect x="11" y="3" width="5" height="9" fill="#d8e4e4"/>')],[1283,229,T(229,'配电网故障试验检测案例配置V1.00',15)],[2127,12,svg(12,2,'0 0 12 2','<rect width="12" height="1.500" fill="#111"/>')],[2183,12,svg(12,13,'0 0 12 13','<rect x=".8" y=".8" width="10.400" height="11.400" fill="none" stroke="#111" stroke-width="1.500"/>')],[2238,12,svg(12,12,'0 0 12 12','<path d="M0 0l12 12M12 0L0 12" stroke="#111" stroke-width="1.500"/>')]]),'background:#fff'],
  [1110,33,H(1251,[[1258,58,T(58,'仿真案例',15)],[1326,78,T(58,'实际案例',15),'justify-content:center;height:27px;background:#cce8ff;border:1px solid #99d1ff'],[1414,58,T(58,'案例抽取',15)]],'align-items:center;padding-top:6px'),'background:#fff;box-sizing:border-box'],
  [1169,25,H(1251,[B(1274,169),B(1542,169,'条件搜索',59),B(1811,168,'页码跳转',58),B(2080,167,'下一页',44)])],
  [1217,543,H(1251,[[1260,489,V(1218,[[1219,521,`${table}${vsb}`,'padding-left:1px;width:487px'],[1740,19,hsb]]),'border:1.500px solid #8a8f96;align-items:flex-start'],
   [1773,488,`<signal-plot></signal-plot>`,'background:#fff;border:1.500px solid #8a8f96']])]
 ])+`<div class="menu"><div>${T(88,'实际波形分析',15)}</div><div>${T(117,'实际波形分析结果',15)}</div></div>
 <div class="cur" style="left:159px;top:72px">${svg(15,23,'0 0 15 23','<path d="M1 1v17l4-4 3 7 3-1.500-3-6.500h6z" fill="#fff" stroke="#111"/>')}</div>
 <div class="zoomb" style="left:930px;top:159px;width:59px;height:25px;display:flex;align-items:center;justify-content:center;background:#e1e1e1;border:1.500px solid #adadad">${T(28,'放大',15)}</div>
 <div class="tb" style="left:522px;top:630px;width:488px;height:34px">${H(1773,tools)}</div>`});

/* ---------- arrows ---------- */
make('flow-arrows',`:host{width:860px;height:370px;pointer-events:none}`,svg(860,370,'1655 860 860 370',
 `<path d="M1711 868H1809V943H1857L1760 1017L1665 943H1711Z" fill="#4472c4" stroke="#172c51" stroke-width="4"/>
 <path d="M2436 963L2286 1137L2474 1207" fill="none" stroke="#4472c4" stroke-width="1.800"/>
 <path d="M2451 946L2421 962L2446 979Z" fill="#4472c4"/><path d="M2491 1213L2462 1216L2471 1191Z" fill="#4472c4"/>`));

/* ---------- waveform panels ---------- */
make('wave-panel',`:host{filter:drop-shadow(0 3px 5px rgba(0,0,0,.45))}text{fill:#fff;font-family:"Liberation Serif","Noto Sans CJK SC",serif;font-weight:300}`,el=>{
 const NS='vector-effect="non-scaling-stroke" fill="none" stroke-linejoin="round"';
 const call=(x,y,x1,yl,x2,tx,te,ty,t)=>`<path d="M${x2} ${yl}H${x1}L${x} ${y}" stroke="#fff" stroke-width="2.400" ${NS}/><ellipse cx="${x}" cy="${y}" rx="8.500" ry="11.500" fill="#fff"/>`+X(tx,te,ty-2,64,t);
 const wave=(p)=>{let d='M'+p[0];for(let i=1;i<p.length;i++){const [a,b]=p[i-1],[c,e]=p[i],k=(c-a)*.3642;d+=`C${a+k} ${b} ${c-k} ${e} ${c} ${e}`}return d};
 if(el.getAttribute('kind')=='voltage'){
  return svg(762,563,'30 46 1492 1472',`<rect x="30" y="46" width="1492" height="1472" rx="5" fill="#fff"/><rect x="41" y="63" width="1470" height="708"/><rect x="41" y="788" width="1470" height="712"/>
  <path d="M518 398H1510" stroke="#666" stroke-width="3" ${NS}/><path d="M41 398H522" stroke="#7f9d55" stroke-width="3.500" ${NS}/>
  <path d="M515 72V762" stroke="#c31fc3" stroke-width="1.800" stroke-dasharray="12 6" ${NS}/>
  <path d="${wave([[515,398],[606,113],[728,657],[850,137],[969,657],[1088,137],[1210,657],[1328,137],[1451,657]])}C1470 657 1490 540 1510 400" stroke="#76924c" stroke-width="1.800" ${NS}/>
  <path d="M720 657h16M961 657h17M1202 657h17M1443 657h16M1080 137h16M1320 137h16" stroke="#7d9b52" stroke-width="3.500" ${NS}/>
  ${call(606,113,446,217,258,290,423,180,'181.540')}${call(852,137,797,240,660,661,794,195,'166.811')}
  ${X(67,115,719,60,'(a)')}${X(128,512,717,56,'实测零序电压（V）')}
  <path d="M41 1145H506" stroke="#2c7a26" stroke-width="2.200" ${NS}/>
  <path d="M506 1145L514 1150${wave([[514,1150],[600,808],[723,1472],[845,820],[966,1472],[1087,818],[1208,1472],[1329,818],[1450,1472]]).replace(/^M[^C]*/,'')}C1473 1472 1490 1290 1510 1120" stroke="#1fb81f" stroke-width="2.400" ${NS}/>
  ${call(600,810,443,912,292,330,411,869,'1872')}${call(845,820,789,922,648,679,759,886,'1795')}
  ${X(67,117,1443,60,'(b)')}${X(130,514,1441,56,'仿真零序电压（V）')}`);
 }
 const pts='55,432 66,432 68,380 70,200 72,115 74,250 76,375 79,232 82,300 84,240 90,270 96,340 100,430 104,430 112,340 120,270 126,320 130,365 138,382 145,345 153,315 162,370 170,405 178,395 188,370 196,385 203,432 250,432 255,437 258,560 261,695 264,620 270,550 275,450 281,408 285,430 290,520 298,595 305,575 312,510 319,468 326,515 334,545 344,500 354,462 362,475 373,515 382,460 390,432 394,420 397,432 436,432 439,340 443,137 446,325 449,235 452,290 455,250 462,400 470,445 478,370 484,300 490,270 498,370 508,390 519,320 530,360 541,412 550,375 558,375 570,400 574,440 579,432 616,432 621,520 626,600 630,705 634,640 637,570 641,470 646,408 650,435 656,435 662,540 667,605 673,570 679,520 685,478 695,505 704,552 714,490 720,460 725,475 729,460 740,505 748,470 753,430 755,408 759,432 804,432 810,340 817,130 825,300 830,440 835,485 843,440 852,310 860,248 866,340 873,375 882,350 892,312 900,375 908,412 915,410 928,370 936,415 942,442 947,432 982,432 985,540 989,625 996,560 1002,500 1010,440 1017,430 1024,520 1031,585 1037,560 1044,500 1050,478 1058,505 1068,562 1078,500 1089,435 1098,512 1104,512 1112,470 1118,432 1121,420 1124,432 1172,432 1177,370 1182,137 1184,405 1190,150 1195,260 1200,300 1204,400 1208,462 1215,370 1221,290 1227,248 1236,330 1244,430 1252,360 1258,320 1265,320 1275,370 1280,410 1284,440 1290,385 1296,355 1303,400 1309,432 1348,432 1351,540 1353,662 1356,600 1360,450 1363,520 1366,655 1372,620 1377,470 1385,430 1394,450 1398,560 1402,625 1410,520 1418,468 1428,505 1438,552 1447,480 1455,440 1460,460 1465,495 1473,495 1479,450 1484,420 1488,432 1520,432';
 const cyc='M60 1139C80 1139 80 1000 86 920C90 835 97 835 101 910C106 1000 108 1048 115 1048C124 1048 128 978 141 978C152 978 155 1020 175 1050C195 1078 207 1120 222 1137C230 1142 240 1139 248 1141C264 1146 264 1200 269 1300C272 1400 274 1427 277 1427C281 1427 284 1380 288 1300C291 1250 293 1232 298 1232C308 1232 312 1300 324 1300C336 1300 340 1255 365 1225C385 1195 392 1150 408 1141C415 1138 420 1139 427 1139';
 return svg(760,564,'44 38 1489 1474',`<defs><clipPath id="c"><rect x="55" y="779" width="1466" height="715"/></clipPath></defs><rect x="44" y="38" width="1488" height="1474" rx="5" fill="#fff"/><rect x="55" y="51" width="1466" height="713"/><rect x="55" y="779" width="1466" height="715"/>
 <path d="M55 432H1521" stroke="#4c4c4c" stroke-width="3.500" ${NS}/><path d="M203 432H250M397 432H436M579 432H616M759 432H804M947 432H982M1124 432H1172M1309 432H1348M1488 432H1521" stroke="#7f9f54" stroke-width="3" ${NS}/>
 <polyline points="${pts}" stroke="#86a85a" stroke-width="1.900" ${NS}/>
 ${call(69,115,152,205,297,171,266,162,'2.089')}${call(121,270,202,357,350,223,317,315,'0.987')}${call(444,137,525,224,672,551,641,180,'1.977')}${call(490,270,570,357,719,590,683,315,'0.970')}${call(817,128,897,215,1044,925,1018,180,'2.018')}${call(862,248,943,336,1091,969,1059,293,'1.224')}${call(1186,137,1267,224,1415,1292,1382,180,'1.943')}${call(1226,248,1308,336,1455,1332,1422,293,'1.153')}
 ${X(103,148,100,58,'(a)')}${X(161,528,98,54,'实测零序电流（A）')}
 <g clip-path="url(#c)"><path d="M55 1139H60" stroke="#12dc12" stroke-width="2.800" ${NS}/>${[0,367,734,1101].map(o=>`<path transform="translate(${o} 0)" d="${cyc}" stroke="#12dc12" stroke-width="2.800" ${NS}/>`).join('')}</g>
 ${call(463,861,545,947,690,569,662,905,'17.86')}${call(512,972,592,1059,741,614,707,1017,'9.915')}
 ${X(103,151,823,58,'(b)')}${X(165,532,821,54,'仿真零序电流（A）')}`)});

/* ---------- text stretched to a given width ---------- */
customElements.define('fit-text',class extends HTMLElement{
  connectedCallback(){ if(this.shadowRoot) return; const r=this.attachShadow({mode:'open'});
   r.innerHTML='<style>:host{display:block;flex:none;white-space:nowrap;line-height:1}span{display:inline-block;transform-origin:0 50%;white-space:nowrap}</style><span><slot></slot></span>';
   const s=r.querySelector('span'),w=+this.getAttribute('w');
   this.style.width=w+'px';
   const m=s.getBoundingClientRect().width; if(m>0&&w>0) s.style.transform=`translateY(var(--dy,0px)) scaleX(${w/m})`; }
});
</script>
</body>
</html>
